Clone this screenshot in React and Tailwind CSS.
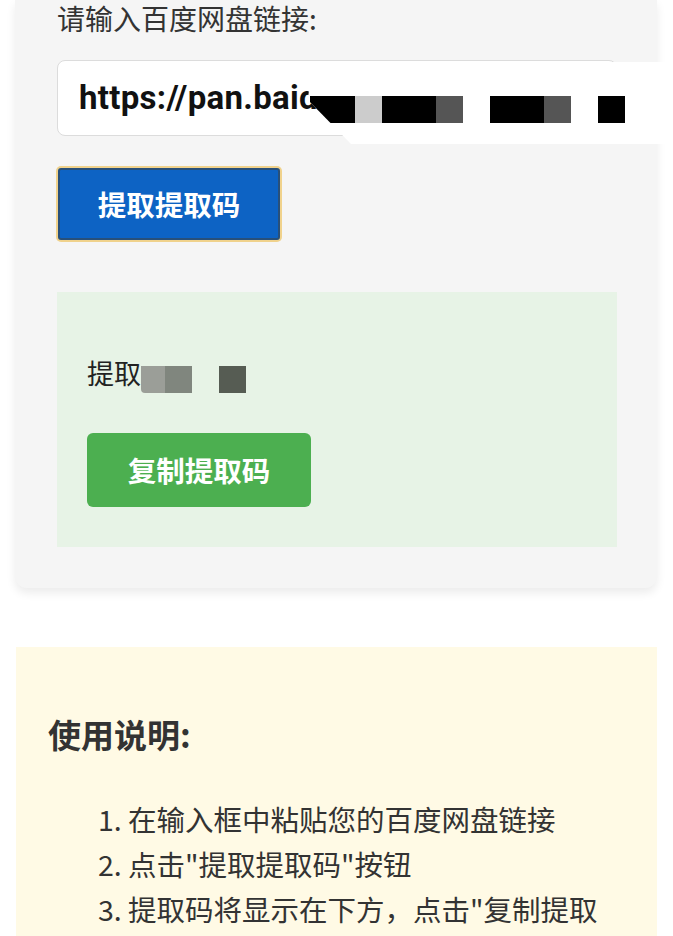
import React from "react";

export default function App() {
  return (
    <div className="min-h-screen bg-white font-['Noto_Sans_CJK_SC','Noto_Sans',sans-serif] text-[#333]">
      {/* main card */}
      <div className="relative ml-[15px] w-[642px] rounded-b-xl bg-[#f5f5f5] pl-[42px] pr-[40px] pb-[41px] shadow-[0_5px_10px_rgba(0,0,0,0.08)]">
        <div className="text-[28px] leading-[36px] text-[#333]">请输入百度网盘链接:</div>
        <div className="mt-[24px] flex h-[76px] items-center overflow-hidden rounded-lg border border-[#dcdcdc] bg-white px-[21px]">
          <span className="whitespace-nowrap font-['Roboto',sans-serif] text-[33px] font-bold tracking-[0.3px] text-[#111]">
            https://pan.baidu.com/s/
          </span>
        </div>

        {/* redaction overlay */}
        <div className="absolute left-[292px] top-[62px] h-[82px] w-[366px] bg-white [clip-path:polygon(10px_0,100%_0,100%_100%,44px_100%,1px_38px,3px_16px)]">
          <div className="absolute left-[3px] top-[34px] flex h-[27px]">
            <div className="h-full w-[45px] rounded-bl-[14px] bg-black" />
            <div className="h-full w-[27px] bg-[#cccccc]" />
            <div className="h-full w-[54px] bg-black" />
            <div className="h-full w-[27px] bg-[#555555]" />
            <div className="ml-[27px] h-full w-[54px] bg-black" />
            <div className="h-full w-[27px] bg-[#555555]" />
            <div className="ml-[27px] h-full w-[27px] bg-black" />
          </div>
        </div>

        <button className="mt-[32px] ml-[1px] h-[72px] w-[222px] rounded-[3px] border-2 border-[#28507a] bg-[#0d63c4] text-[28.5px] font-bold text-white ring-2 ring-[#f0d28c]">
          提取提取码
        </button>

        <div className="mt-[52px] bg-[#e7f3e6] px-[30px] pt-[58px] pb-[40px]">
          <div className="flex items-start">
            <span className="text-[27px] leading-[45px] text-[#222]">提取</span>
            <div className="mt-[16px] h-[27px] w-[24px] rounded-bl-[4px] bg-[#9b9e98]" />
            <div className="mt-[16px] h-[27px] w-[27px] bg-[#80867e]" />
            <div className="mt-[16px] ml-[27px] h-[27px] w-[27px] bg-[#565c53]" />
          </div>
          <button className="mt-[38px] h-[74px] w-[224px] rounded-[6px] bg-[#4caf50] text-[28.5px] font-bold text-white">
            复制提取码
          </button>
        </div>
      </div>

      {/* instructions */}
      <div className="mt-[59px] ml-[16px] w-[641px] bg-[#fffae5] pl-[32px] pr-[20px] pt-[63px] pb-[30px]">
        <h3 className="text-[33px] font-bold leading-[48px] text-[#333]">使用说明:</h3>
        <ol className="mt-[38px] pl-[50px] text-[28.5px] leading-[45px] text-[#333]">
          <li className="flex">
            <span className="w-[30px]">1.</span>
            <span>在输入框中粘贴您的百度网盘链接</span>
          </li>
          <li className="flex">
            <span className="w-[30px]">2.</span>
            <span>点击"提取提取码"按钮</span>
          </li>
          <li className="flex">
            <span className="w-[30px]">3.</span>
            <span>
              提取码将显示在下方，点击"复制提取
              <br />
              码"按钮
            </span>
          </li>
        </ol>
      </div>
    </div>
  );
}
